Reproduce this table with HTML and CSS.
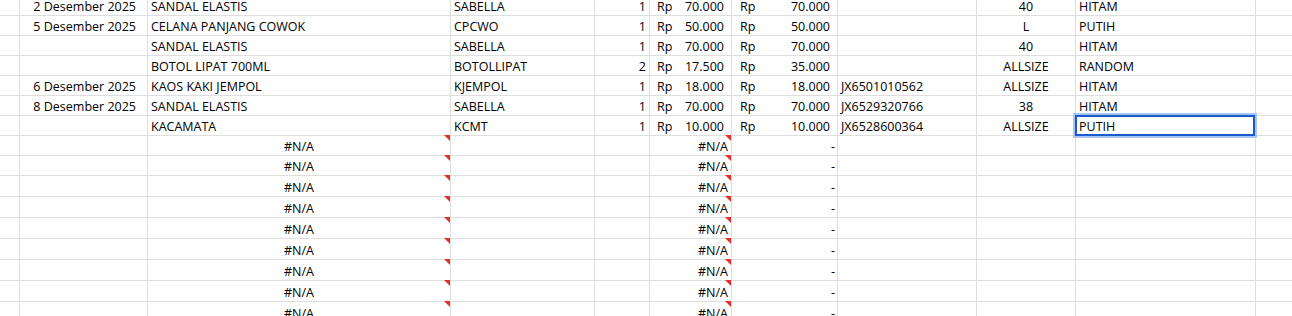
FILE: index.html
```html
<!DOCTYPE html>
<html lang="id">
<head>
<meta charset="utf-8">
<title>Penjualan</title>
<link rel="stylesheet" href="styles.css">
</head>
<body>
<div class="sheet">
  <div class="row">
    <div class="c"></div><div class="c date">2 Desember 2025</div><div class="c">SANDAL ELASTIS</div><div class="c">SABELLA</div><div class="c qty">1</div>
    <div class="c acc"><span>Rp</span><span>70.000</span></div><div class="c tot"><span>Rp</span><span>70.000</span></div>
    <div class="c"></div><div class="c ctr">40</div><div class="c">HITAM</div><div class="c last"></div>
  </div>
  <div class="row">
    <div class="c"></div><div class="c date">5 Desember 2025</div><div class="c">CELANA PANJANG COWOK</div><div class="c">CPCWO</div><div class="c qty">1</div>
    <div class="c acc"><span>Rp</span><span>50.000</span></div><div class="c tot"><span>Rp</span><span>50.000</span></div>
    <div class="c"></div><div class="c ctr">L</div><div class="c">PUTIH</div><div class="c last"></div>
  </div>
  <div class="row">
    <div class="c"></div><div class="c date"></div><div class="c">SANDAL ELASTIS</div><div class="c">SABELLA</div><div class="c qty">1</div>
    <div class="c acc"><span>Rp</span><span>70.000</span></div><div class="c tot"><span>Rp</span><span>70.000</span></div>
    <div class="c"></div><div class="c ctr">40</div><div class="c">HITAM</div><div class="c last"></div>
  </div>
  <div class="row">
    <div class="c"></div><div class="c date"></div><div class="c">BOTOL LIPAT 700ML</div><div class="c">BOTOLLIPAT</div><div class="c qty">2</div>
    <div class="c acc"><span>Rp</span><span>17.500</span></div><div class="c tot"><span>Rp</span><span>35.000</span></div>
    <div class="c"></div><div class="c ctr">ALLSIZE</div><div class="c">RANDOM</div><div class="c last"></div>
  </div>
  <div class="row">
    <div class="c"></div><div class="c date">6 Desember 2025</div><div class="c">KAOS KAKI JEMPOL</div><div class="c">KJEMPOL</div><div class="c qty">1</div>
    <div class="c acc"><span>Rp</span><span>18.000</span></div><div class="c tot"><span>Rp</span><span>18.000</span></div>
    <div class="c">JX6501010562</div><div class="c ctr">ALLSIZE</div><div class="c">HITAM</div><div class="c last"></div>
  </div>
  <div class="row">
    <div class="c"></div><div class="c date">8 Desember 2025</div><div class="c">SANDAL ELASTIS</div><div class="c">SABELLA</div><div class="c qty">1</div>
    <div class="c acc"><span>Rp</span><span>70.000</span></div><div class="c tot"><span>Rp</span><span>70.000</span></div>
    <div class="c">JX6529320766</div><div class="c ctr">38</div><div class="c">HITAM</div><div class="c last"></div>
  </div>
  <div class="row">
    <div class="c"></div><div class="c date"></div><div class="c">KACAMATA</div><div class="c">KCMT</div><div class="c qty">1</div>
    <div class="c acc"><span>Rp</span><span>10.000</span></div><div class="c tot"><span>Rp</span><span>10.000</span></div>
    <div class="c">JX6528600364</div><div class="c ctr">ALLSIZE</div><div class="c sel">PUTIH</div><div class="c last"></div>
  </div>

  <div class="row">
    <div class="c"></div><div class="c date"></div><div class="c ctr note">#N/A</div><div class="c"></div><div class="c qty"></div>
    <div class="c na note">#N/A</div><div class="c dash">-</div>
    <div class="c"></div><div class="c"></div><div class="c"></div><div class="c last"></div>
  </div>
  <div class="row">
    <div class="c"></div><div class="c date"></div><div class="c ctr note">#N/A</div><div class="c"></div><div class="c qty"></div>
    <div class="c na note">#N/A</div><div class="c dash">-</div>
    <div class="c"></div><div class="c"></div><div class="c"></div><div class="c last"></div>
  </div>
  <div class="row tall">
    <div class="c"></div><div class="c date"></div><div class="c ctr note">#N/A</div><div class="c"></div><div class="c qty"></div>
    <div class="c na note">#N/A</div><div class="c dash">-</div>
    <div class="c"></div><div class="c"></div><div class="c"></div><div class="c last"></div>
  </div>
  <div class="row tall">
    <div class="c"></div><div class="c date"></div><div class="c ctr note">#N/A</div><div class="c"></div><div class="c qty"></div>
    <div class="c na note">#N/A</div><div class="c dash">-</div>
    <div class="c"></div><div class="c"></div><div class="c"></div><div class="c last"></div>
  </div>
  <div class="row tall">
    <div class="c"></div><div class="c date"></div><div class="c ctr note">#N/A</div><div class="c"></div><div class="c qty"></div>
    <div class="c na note">#N/A</div><div class="c dash">-</div>
    <div class="c"></div><div class="c"></div><div class="c"></div><div class="c last"></div>
  </div>
  <div class="row tall">
    <div class="c"></div><div class="c date"></div><div class="c ctr note">#N/A</div><div class="c"></div><div class="c qty"></div>
    <div class="c na note">#N/A</div><div class="c dash">-</div>
    <div class="c"></div><div class="c"></div><div class="c"></div><div class="c last"></div>
  </div>
  <div class="row tall">
    <div class="c"></div><div class="c date"></div><div class="c ctr note">#N/A</div><div class="c"></div><div class="c qty"></div>
    <div class="c na note">#N/A</div><div class="c dash">-</div>
    <div class="c"></div><div class="c"></div><div class="c"></div><div class="c last"></div>
  </div>
  <div class="row tall">
    <div class="c"></div><div class="c date"></div><div class="c ctr note">#N/A</div><div class="c"></div><div class="c qty"></div>
    <div class="c na note">#N/A</div><div class="c dash">-</div>
    <div class="c"></div><div class="c"></div><div class="c"></div><div class="c last"></div>
  </div>
  <div class="row tall">
    <div class="c"></div><div class="c date"></div><div class="c ctr note">#N/A</div><div class="c"></div><div class="c qty"></div>
    <div class="c na note">#N/A</div><div class="c dash">-</div>
    <div class="c"></div><div class="c"></div><div class="c"></div><div class="c last"></div>
  </div>
  <div class="row tall">
    <div class="c"></div><div class="c date"></div><div class="c ctr note">#N/A</div><div class="c"></div><div class="c qty"></div>
    <div class="c na note">#N/A</div><div class="c dash">-</div>
    <div class="c"></div><div class="c"></div><div class="c"></div><div class="c last"></div>
  </div>
</div>
</body>
</html>
```
FILE: styles.css
```css
html, body {
  margin: 0;
  padding: 0;
  background: #ffffff;
  overflow: hidden;
}

body {
  font-family: "Open Sans", "Liberation Sans", sans-serif;
  font-size: 12.5px;
  color: #000000;
}

.sheet {
  margin-top: -4px;
}

.row {
  display: grid;
  grid-template-columns: 20px 128px 303px 144px 55px 82px 106px 139px 99px 180px 1fr;
  height: 20px;
}

.row.tall {
  height: 21px;
}

.c {
  box-sizing: border-box;
  position: relative;
  display: flex;
  align-items: flex-end;
  justify-content: flex-start;
  padding: 0 3px 1px 3px;
  line-height: 15px;
  white-space: nowrap;
  border-right: 1px solid #dedede;
  border-bottom: 1px solid #dedede;
}

.c.last {
  border-right: none;
}

.date {
  justify-content: flex-end;
  padding-right: 11px;
}

.qty {
  justify-content: flex-end;
  padding-right: 3px;
}

.ctr {
  justify-content: center;
}

.acc {
  justify-content: space-between;
  padding-left: 7px;
  padding-right: 7px;
}

.tot {
  justify-content: space-between;
  padding-left: 8px;
  padding-right: 7px;
}

.na {
  justify-content: flex-end;
  padding-right: 3px;
}

.dash {
  justify-content: flex-end;
  padding-right: 2px;
}

.note::after {
  content: "";
  position: absolute;
  top: -1px;
  right: 0;
  width: 6px;
  height: 6px;
  background: #e2302a;
  clip-path: polygon(0 0, 100% 0, 100% 100%);
}

.sel::before {
  content: "";
  position: absolute;
  left: -1px;
  top: -1px;
  width: 180px;
  height: 21px;
  box-sizing: border-box;
  border: 2px solid #1a5bcc;
  box-shadow: 0 0 0 2px #a7c5f6;
  z-index: 2;
}
```
